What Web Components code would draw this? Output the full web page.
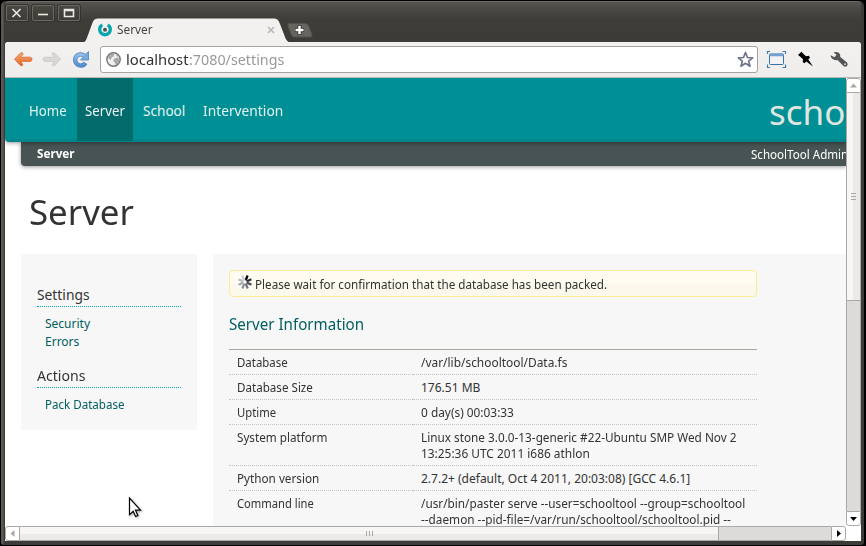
<!DOCTYPE html>
<html lang="en">
<head>
<meta charset="utf-8">
<title>Server</title>
<style>
html,body{margin:0;height:100%;overflow:hidden;background:#000}
body{font-family:"Noto Sans","Open Sans",sans-serif;font-size:12px;color:#333}
</style>
</head>
<body>
<browser-window>
  <window-titlebar slot="title"></window-titlebar>
  <browser-toolbar slot="toolbar"></browser-toolbar>
  <school-page slot="page"></school-page>
  <scroll-bar slot="vbar" vertical></scroll-bar>
  <scroll-bar slot="hbar"></scroll-bar>
</browser-window>
<script>
function define(name, html, ready) {
  const t = document.createElement('template');
  t.innerHTML = html;
  customElements.define(name, class extends HTMLElement {
    constructor() { super(); this.attachShadow({mode: 'open'}).append(t.content.cloneNode(true)); }
    connectedCallback() { if (ready) ready.call(this, this.shadowRoot); }
  });
}

// One line of text condensed or widened to the advance given in "w".
define('fit-text', `<style>
:host{display:block;white-space:pre;line-height:inherit}
span{display:inline-block;transform-origin:0 50%;white-space:pre}
</style><span><slot></slot></span>`, function (r) {
  const w = parseFloat(this.getAttribute('w')), s = r.querySelector('span');
  this.style.width = w + 'px';
  s.style.transform = 'scaleX(' + w / s.offsetWidth + ')';
});

define('window-button', `<style>
:host{display:block;box-sizing:border-box;width:22px;height:16px;border:1px solid #6b6962;border-radius:2px;background:linear-gradient(#4a4842,#3c3b36);box-shadow:0 0 0 1px #33322e}
svg{display:block}
</style><svg width="20" height="14" fill="none" stroke="#eceae4"></svg>`, function (r) {
  const d = {close: 'M5.500 3l8 8M13.500 3l-8 8', min: 'M5 8.500h10', max: 'M5.500 3.500h9v7h-9zM5.500 4.500h9'}[this.getAttribute('kind')];
  r.querySelector('svg').innerHTML = '<path stroke-width="1.6" d="' + d + '"/>';
});

define('browser-tab', `<style>
:host{display:block;position:relative;width:211px;height:25px}
.bg{position:absolute;inset:0}
.row{position:relative;display:flex;align-items:center;height:24px;padding-left:16px;color:#444}
fit-text{margin-left:5px;line-height:20px;font-size:12px}
.x{margin-left:114px}
</style>
<svg class="bg" width="211" height="25"><path d="M0 25C4 24 4 22 6 17L10 6C12 1 13 .5 17 .5H191C195 .5 196 1 198 6L203 19C204.500 23 206 24.500 211 25Z" fill="#f2f1f0"/></svg>
<div class="row">
<svg width="14" height="14" viewBox="0 0 14 14"><path d="M4.300 1.900A5.300 5.300 0 1 0 9.700 1.900" fill="none" stroke="#07a5af" stroke-width="3.300"/><circle cx="7" cy="6.800" r="2" fill="#4b5554"/></svg>
<fit-text w="35.500">Server</fit-text>
<svg class="x" width="8" height="8"><path d="M1 1l6 6M7 1l-6 6" stroke="#b4b4b2" stroke-width="1.500"/></svg>
</div>`);

define('window-titlebar', `<style>
:host{display:flex;height:41px;align-items:flex-start;background:linear-gradient(#57554f 0,#494741 8px,#3e3d38 18px,#3c3b37);border-top:1px solid #6c6a64;box-sizing:border-box;border-radius:4px 4px 0 0}
.b{display:flex;gap:4px;padding:3px 0 0 1px}
browser-tab{margin:16px 0 0 2px}
.plus{margin:21px 0 0 -6px}
</style>
<div class="b"><window-button kind="close"></window-button><window-button kind="min"></window-button><window-button kind="max"></window-button></div>
<browser-tab></browser-tab>
<svg class="plus" width="26" height="15"><path d="M2 .5H17C20 .5 21 1.500 22 4L25 12Q25.500 14 23.500 14H8C5.500 14 5 13 4 11L1 3Q.5 .5 2 .5Z" fill="#67655f" stroke="#55534d"/><path d="M8 7h9M12.500 2.500v9" stroke="#2f2e2b" stroke-width="4"/><path d="M8.500 7h8M12.500 3v8" stroke="#fff" stroke-width="2.400"/></svg>`);

define('address-bar', `<style>
:host{display:flex;align-items:center;box-sizing:border-box;width:658px;height:27px;border:1px solid #a5a39f;border-radius:3px;background:#fff;font-size:14.700px;line-height:24px;padding:0 3px 0 5px;color:#333}
fit-text{margin-top:-2px}
.p{color:#999}.g{margin-right:5px}.s{margin-left:auto}
</style>
<svg class="g" width="15" height="15"><circle cx="7.500" cy="7.500" r="6.700" fill="#f0f0ef" stroke="#747474" stroke-width="1.400"/><path d="M2 4.500L5 1.700 8.300 2 7.500 4.600 5.500 5.500 4.800 8 2.500 6.500zM8.500 6.500L12 5.300 13.700 8 11.800 12 9.500 13.300 9 10.500 7 9zM10 2l2.500 2-2 .5z" fill="#a9a9a9"/></svg>
<fit-text w="62.500">localhost</fit-text><fit-text class="p" w="95.500">:7080/settings</fit-text>
<svg class="s" width="17" height="17"><path d="M8.500 1.500l2 5 5.200.3-4.100 3.300 1.400 5.100-4.500-2.900L4 15.200l1.400-5.100L1.300 6.800l5.200-.3z" fill="#fff" stroke="#6c748d" stroke-width="1.700" stroke-linejoin="round"/></svg>`);

define('browser-toolbar', `<style>
:host{display:flex;align-items:flex-start;box-sizing:border-box;height:36px;background:linear-gradient(#f2f1f0,#efeeed);border-bottom:1px solid #bbb8b3;border-radius:3px 3px 0 0}
svg{display:block}
address-bar{margin:4px 0 0 10px}
</style>
<svg width="85" height="35" viewBox="0 0 85 35">
<defs><linearGradient id="o" x2="0" y2="1"><stop stop-color="#f6ad70"/><stop offset="1" stop-color="#e2622a"/></linearGradient><linearGradient id="b" x2="0" y2="1"><stop stop-color="#92bce9"/><stop offset="1" stop-color="#558fcd"/></linearGradient></defs>
<path d="M9.500 17.200L15.500 11Q17 10 17.800 11.200 18.200 12 17.500 13L15.300 15.200H25.500Q27 15.500 27 17.300T25.500 19.400H15.300L17.500 21.700Q18.200 23 17.300 23.700 16.300 24.200 15.200 23.200Z" fill="url(#o)" stroke="#d96a32" stroke-width=".8"/>
<path d="M55.500 17.200L49.500 11Q48 10 47.200 11.200 46.800 12 47.500 13L49.700 15.200H39.500Q38 15.500 38 17.300T39.500 19.400H49.700L47.500 21.700Q46.800 23 47.700 23.700 48.700 24.200 49.800 23.200Z" fill="#d9d8d6" stroke="#c7c6c3" stroke-width=".8"/>
<path d="M80.500 21A5.600 5.600 0 1 1 79.500 13.800" fill="none" stroke="#4c83c0" stroke-width="4.400"/>
<path d="M83.500 9.500V18H75.500L78 15.300 80.500 12.300Z" fill="#79aae0" stroke="#4c83c0" stroke-width=".8"/>
<path d="M80.500 21A5.600 5.600 0 1 1 79.500 13.800" fill="none" stroke="url(#b)" stroke-width="3"/>
</svg>
<address-bar></address-bar>
<svg width="103" height="35" viewBox="0 0 103 35">
<path d="M9.500 12V9.500H12M24.500 9.500H27.500V12M9.500 22.500V25.500H12M24.500 25.500H27.500V22.500" fill="none" stroke="#427cab" stroke-width="1.200"/>
<rect x="11.500" y="12" width="14" height="10.500" rx="1" fill="#f0f2f4" stroke="#3673a4"/><path d="M11.500 13h14" stroke="#6fa1d1" stroke-width="2.400"/>
<path d="M40.500 13L44 9.700 45.500 11.500 48.500 14.200 51.200 13.800 52.500 15.500 50.800 17.500 55.500 24.500 48.800 19.600 46.800 21.300 45.200 20 45.500 17.200 42.500 14.400Z" transform="translate(-.5)" fill="#000"/>
<path d="M75.500 10.600Q78 9.200 80.500 10.600 82.800 12.300 82.300 15L89 20.500Q90.500 22.300 89 24 87.300 25.500 85.500 24L79.500 18Q76.500 18.700 74.200 16.700 72.300 14.900 72.700 13.200L76.500 15.200 78.500 12.800Z" fill="#555"/><circle cx="87" cy="22.200" r=".9" fill="#ddd"/>
</svg>`);

define('nav-item', `<style>
:host{display:block;box-sizing:border-box;height:63px;padding:21px 8px 0;line-height:24px;font-size:13.600px;color:#e3f3f1}
:host([active]){background:#026b6c;color:#f0f5f4}
</style><slot></slot>`);

define('school-header', `<style>
:host{display:block;position:relative}
nav{position:relative;display:flex;height:64px;background:linear-gradient(#008f94 60px,#008287);padding-left:16px;border-radius:0 0 0 4px;box-shadow:0 1px 4px rgba(0,0,0,.4);box-sizing:border-box;z-index:1}
nav nav-item+nav-item{margin-left:2px}
.logo{margin-left:auto;width:77px;overflow:hidden;font-size:35px;line-height:50px;padding-top:9px;color:#dfe6e1}
.sub{display:flex;justify-content:space-between;box-sizing:border-box;height:24px;margin-left:16px;padding-left:16px;background:#485353;color:#fff;border-radius:0 0 0 4px;box-shadow:0 1px 4px rgba(0,0,0,.4);line-height:23px}
.crop{width:95px;height:24px;overflow:hidden;line-height:25px}
b{font-weight:700}
</style>
<nav><nav-item><fit-text w="38">Home</fit-text></nav-item><nav-item active><fit-text w="40">Server</fit-text></nav-item><nav-item><fit-text w="42">School</fit-text></nav-item><nav-item><fit-text w="80">Intervention</fit-text></nav-item>
<div class="logo"><fit-text w="76">scho</fit-text></div></nav>
<div class="sub"><b><fit-text w="38">Server</fit-text></b><div class="crop"><fit-text w="97.500">SchoolTool Admin</fit-text></div></div>`);

define('side-section', `<style>
:host{display:block;color:#333}
h3{margin:0 0 8px;font-weight:400;font-size:13.800px;line-height:20px;height:21px;border-bottom:1px dotted #0aa;padding:0}
.l{padding-left:8px;color:#005e60;line-height:18px}
</style><h3><slot name="h"></slot></h3><div class="l"><slot></slot></div>`);

define('side-panel', `<style>
:host{display:block;box-sizing:border-box;width:176px;height:176px;background:#f7f7f7;padding:31px 16px 0}
side-section+side-section{margin-top:15px}
</style>
<side-section><fit-text slot="h" w="53">Settings</fit-text><fit-text w="45">Security</fit-text><fit-text w="34">Errors</fit-text></side-section>
<side-section><fit-text slot="h" w="48">Actions</fit-text><fit-text w="79">Pack Database</fit-text></side-section>`);

define('notice-box', `<style>
:host{display:flex;box-sizing:border-box;height:27px;border:1px solid #fdec94;border-radius:4px;background:linear-gradient(#fefbf1 50%,#fbf9ec 50%);line-height:28px;padding:0 0 0 8px}
svg{margin:4px 3px 0 0;background:#fff}
</style><svg width="14" height="14"></svg><slot></slot>`, function (r) {
  const shades = ['#000', '#333', '#555', '#777', '#909090', '#a8a8a8', '#bdbdbd', '#cecece'];
  r.querySelector('svg').innerHTML = shades.map((c, i) =>
    '<path d="M7 5.300V0" stroke="' + c + '" stroke-width="2.300" transform="rotate(' + (22 + i * 45) + ' 7 7)"/>').join('');
});

define('info-row', `<style>
:host{display:flex}
div{box-sizing:border-box;padding:5px 8px 3px;border-bottom:1px dotted #c4c4c4;line-height:16px}
.k{width:184px}.v{width:344px}
</style><div class="k"><slot name="k"></slot></div><div class="v"><slot></slot></div>`);

define('server-info', `<style>
:host{display:block;box-sizing:border-box;flex:1;background:#f7f7f7;padding:16px 89px 0 16px;height:290px}
h2{margin:16px 0 0;font-size:15.800px;font-weight:400;color:#005e60;line-height:23px;height:36px}
.t{border-top:1px solid #a8a99d}
</style>
<notice-box><fit-text w="352">Please wait for confirmation that the database has been packed.</fit-text></notice-box>
<h2><fit-text w="135">Server Information</fit-text></h2>
<div class="t">
<info-row><fit-text slot="k" w="50.500">Database</fit-text><fit-text w="146">/var/lib/schooltool/Data.fs</fit-text></info-row>
<info-row><fit-text slot="k" w="75.500">Database Size</fit-text><fit-text w="59">176.51 MB</fit-text></info-row>
<info-row><fit-text slot="k" w="39.500">Uptime</fit-text><fit-text w="93">0 day(s) 00:03:33</fit-text></info-row>
<info-row><fit-text slot="k" w="90.500">System platform</fit-text><fit-text w="316">Linux stone 3.0.0-13-generic #22-Ubuntu SMP Wed Nov 2</fit-text><fit-text w="168.500">13:25:36 UTC 2011 i686 athlon</fit-text></info-row>
<info-row><fit-text slot="k" w="82">Python version</fit-text><fit-text w="269">2.7.2+ (default, Oct 4 2011, 20:03:08) [GCC 4.6.1]</fit-text></info-row>
<info-row><fit-text slot="k" w="76.500">Command line</fit-text><fit-text w="324">/usr/bin/paster serve --user=schooltool --group=schooltool</fit-text><fit-text w="309.500">--daemon --pid-file=/var/run/schooltool/schooltool.pid --</fit-text></info-row>
</div>`);

define('mouse-pointer', `<style>
:host{display:block;position:absolute;left:123px;top:418px;filter:drop-shadow(1px 1px 1px rgba(0,0,0,.35))}
svg{display:block}
</style><svg width="15" height="22"><path d="M1.500 2V18.700L5.200 15.200 7.600 20.500 9.800 19.500 7.500 14.200H12.500Z" fill="#fff" stroke="#000" stroke-width="1.200"/></svg>`);

define('school-page', `<style>
:host{display:block;position:relative;overflow:hidden;background:#fff;height:448px}
h1{margin:0;padding:19px 0 0 24px;font-weight:400;font-size:35px;line-height:54px;height:69px;color:#333}
.cols{display:flex;gap:16px;padding-left:16px}
</style>
<school-header></school-header>
<h1><fit-text w="104.500">Server</fit-text></h1>
<div class="cols"><side-panel></side-panel><server-info></server-info></div>
<mouse-pointer></mouse-pointer>`);

// Scroll bar with end buttons, a gripped thumb and the remaining track.
define('scroll-bar', `<style>
:host{display:flex;box-sizing:border-box;background:#fff}
:host([vertical]){flex-direction:column}
div{box-sizing:border-box;border:1px solid #aaa9a7;display:flex;align-items:center;justify-content:center}
.a{background:#fff}.t{background:linear-gradient(#f7f6f5 50%,#ebeae9 50%)}.r{background:#dcdbda;flex:1}
:host(:not([vertical])) .a{width:15px}:host(:not([vertical])) .t{width:699px;border-left:0}
:host(:not([vertical])) .r{border-left:0;border-right:0}
:host([vertical]) .a{height:15px}:host([vertical]) .t{height:208px;border-top:0;background:linear-gradient(90deg,#f7f6f5 50%,#ebeae9 50%)}
:host([vertical]) .r{border-top:0;border-bottom:0}
.s{border-radius:3px 0 0 3px}.e{border-radius:0 3px 3px 0}
:host([vertical]) .s{border-radius:3px 3px 0 0}:host([vertical]) .e{border-radius:0 0 3px 3px}
svg{display:block;flex:none}
</style>
<div class="a s"><svg width="9" height="9"><path fill="#a9a8a6"/></svg></div><div class="t"><svg width="7" height="7"><path stroke="#aaa9a7"/></svg></div><div class="r"></div><div class="a e"><svg width="9" height="9"><path fill="#000"/></svg></div>`, function (r) {
  const v = this.hasAttribute('vertical'), p = r.querySelectorAll('path');
  p[0].setAttribute('d', v ? 'M1 6.500H8L4.500 2.500Z' : 'M6.500 1V8L2.500 4.500Z');
  p[1].setAttribute('d', v ? 'M1 .5h5M1 3.500h5M1 6.500h5' : 'M.5 1v5M3.500 1v5M6.500 1v5');
  p[2].setAttribute('d', v ? 'M1 3H8L4.500 7Z' : 'M3 1V8L7 4.500Z');
});

define('browser-window', `<style>
:host{display:block;box-sizing:border-box;width:866px;height:546px;padding:1px 2px 1px 1px;background:#000}
.frame{box-sizing:border-box;width:863px;height:544px;border-radius:5px 5px 3px 3px;background:linear-gradient(90deg,#5c5852 0,#5c5852 2px,#33322f 4px,#3c3b37 5px);padding:0 3px 4px 4px}
.body{display:grid;grid-template-columns:841px 15px;grid-template-rows:36px 448px 15px;background:#fff;border-radius:3px 3px 0 0;overflow:hidden}
.tb{grid-column:1/3}
</style>
<div class="frame"><slot name="title"></slot><div class="body"><div class="tb"><slot name="toolbar"></slot></div><slot name="page"></slot><slot name="vbar"></slot><slot name="hbar"></slot></div></div>`);
</script>
</body>
</html>
